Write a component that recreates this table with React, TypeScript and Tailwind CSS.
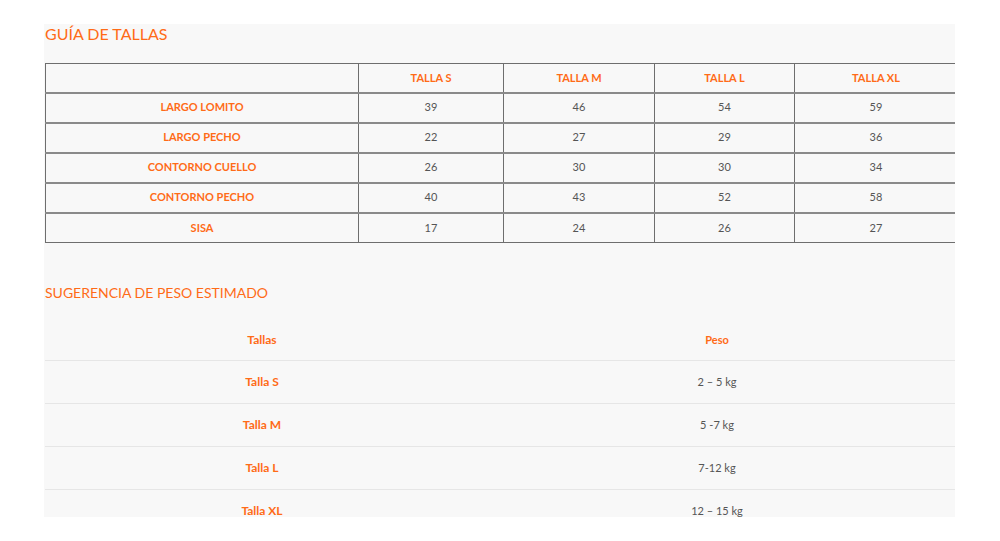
export default function App() {
  const cols = ["TALLA S", "TALLA M", "TALLA L", "TALLA XL"];
  const rows = [
    { label: "LARGO LOMITO", values: ["39", "46", "54", "59"] },
    { label: "LARGO PECHO", values: ["22", "27", "29", "36"] },
    { label: "CONTORNO CUELLO", values: ["26", "30", "30", "34"] },
    { label: "CONTORNO PECHO", values: ["40", "43", "52", "58"] },
    { label: "SISA", values: ["17", "24", "26", "27"] },
  ];
  const pesos = [
    { talla: "Talla S", peso: "2 – 5 kg" },
    { talla: "Talla M", peso: "5 -7 kg" },
    { talla: "Talla L", peso: "7-12 kg" },
    { talla: "Talla XL", peso: "12 – 15 kg" },
  ];

  return (
    <div className="min-h-[541px] w-[1000px] bg-white pt-[24px] font-['Lato',sans-serif]">
      <div className="ml-[44px] h-[493px] w-[911px] overflow-hidden bg-[#f8f8f8] pl-px">
        {/* Guía de tallas */}
        <h2 className="h-[39px] pt-[1px] text-[16px] leading-[18px] text-[#ff6b17]">
          GUÍA DE TALLAS
        </h2>
        <table className="w-[912px] table-fixed border-collapse text-[11px]">
          <colgroup>
            <col className="w-[313px]" />
            <col className="w-[145px]" />
            <col className="w-[151px]" />
            <col className="w-[140px]" />
            <col className="w-[163px]" />
          </colgroup>
          <thead>
            <tr className="h-[29px]">
              <th className="border border-[#6e6e6e]"></th>
              {cols.map((c) => (
                <th
                  key={c}
                  className="border border-[#6e6e6e] text-center font-bold text-[#ff6b17]"
                >
                  {c}
                </th>
              ))}
            </tr>
          </thead>
          <tbody>
            {rows.map((r) => (
              <tr key={r.label} className="h-[30px]">
                <td className="border border-[#6e6e6e] border-t-2 border-t-[#8a8a8a] text-center font-bold text-[#ff6b17]">
                  {r.label}
                </td>
                {r.values.map((v, i) => (
                  <td
                    key={i}
                    className="border border-[#6e6e6e] border-t-2 border-t-[#8a8a8a] text-center text-[#555]"
                  >
                    {v}
                  </td>
                ))}
              </tr>
            ))}
          </tbody>
        </table>

        {/* Sugerencia de peso */}
        <h3 className="mt-[40px] text-[14px] leading-[20px] text-[#ff6b17]">
          SUGERENCIA DE PESO ESTIMADO
        </h3>
        <div className="mt-[15px] text-[11px]">
          <div className="grid h-[43px] grid-cols-[434px_1fr] items-center border-b border-[#e6e6e6] pt-[2px]">
            <div className="text-center text-[12px] font-bold text-[#ff6b17]">Tallas</div>
            <div className="text-center font-bold text-[#ff6b17]">Peso</div>
          </div>
          {pesos.map((p) => (
            <div
              key={p.talla}
              className="grid h-[43px] grid-cols-[434px_1fr] items-center border-b border-[#e6e6e6]"
            >
              <div className="text-center text-[12px] font-bold text-[#ff6b17]">{p.talla}</div>
              <div className="text-center text-[#555]">{p.peso}</div>
            </div>
          ))}
        </div>
      </div>
    </div>
  );
}
